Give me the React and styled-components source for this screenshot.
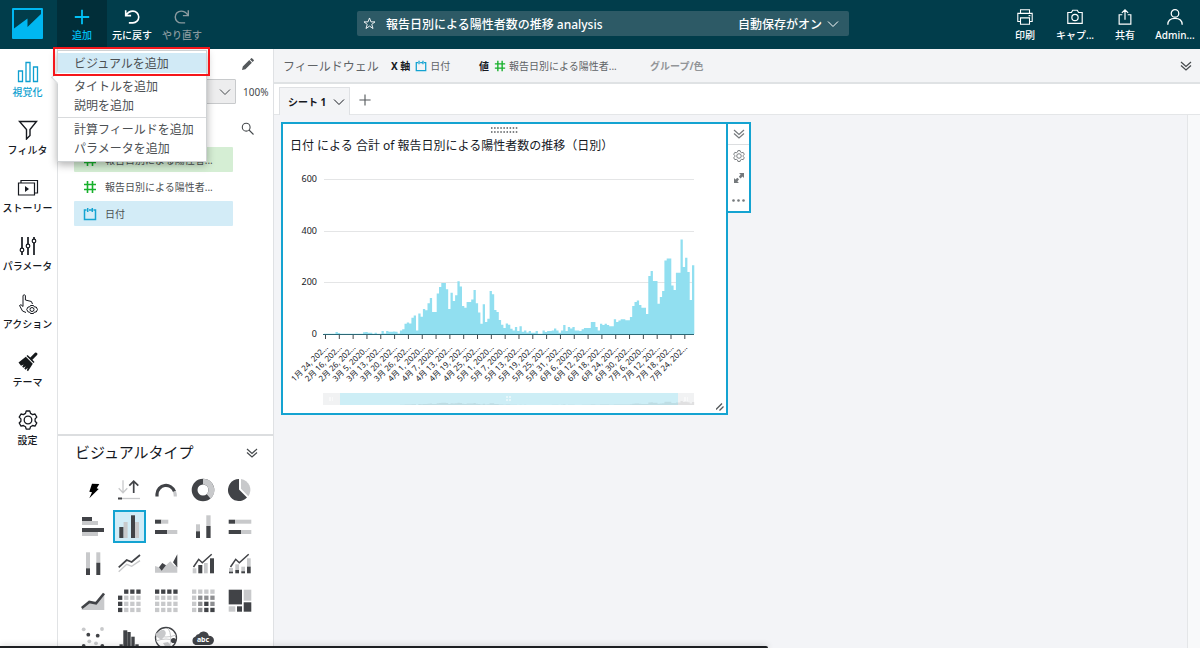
import React from "react";
import { useState } from "react";
import styled, { createGlobalStyle } from "styled-components";

const DARK = "#414347";
const LIGHT = "#c8c9cb";
const MID = "#8d8e91";

const dailyCases = [
  1, 1, 1, 1, 1, 8, 4, 1, 1, 1, 1, 1, 1, 1, 1, 1, 1, 7, 8, 5, 5, 1, 5, 1, 1, 12,
  2, 12, 9, 9, 10, 9, 2, 14, 18, 40, 45, 41, 63, 72, 13, 79, 67, 97, 92, 119,
  139, 85, 85, 157, 182, 197, 197, 173, 97, 160, 128, 150, 204, 184, 108, 102,
  124, 124, 134, 170, 119, 83, 40, 115, 46, 59, 166, 154, 93, 85, 54, 36, 23,
  41, 36, 20, 14, 27, 12, 30, 9, 14, 6, 12, 5, 5, 12, 1, 1, 13, 8, 12, 12, 14,
  21, 14, 5, 14, 35, 12, 27, 21, 27, 13, 13, 12, 18, 23, 23, 23, 46, 46, 27,
  14, 40, 35, 40, 35, 30, 30, 57, 46, 52, 57, 57, 53, 53, 66, 108, 124, 130,
  112, 102, 102, 77, 224, 244, 205, 205, 117, 143, 166, 285, 292, 292, 188,
  170, 237, 237, 366, 259, 295, 240, 132, 266,
];

const axisDates = [
  "1月 24, 202...", "2月 16, 202...", "2月 26, 202...", "3月 5, 2020...",
  "3月 13, 202...", "3月 20, 202...", "3月 26, 202...", "4月 1, 2020...",
  "4月 7, 2020...", "4月 13, 202...", "4月 19, 202...", "4月 25, 202...",
  "5月 1, 2020...", "5月 7, 2020...", "5月 13, 202...", "5月 19, 202...",
  "5月 25, 202...", "5月 31, 202...", "6月 6, 2020...", "6月 12, 202...",
  "6月 18, 202...", "6月 24, 202...", "6月 30, 202...", "7月 6, 2020...",
  "7月 12, 202...", "7月 18, 202...", "7月 24, 202...",
];

/* ---------- icons ---------- */

const Icon = ({ size = 20, box = 20, children, ...rest }) => (
  <svg
    width={size}
    height={size}
    viewBox={`0 0 ${box} ${box}`}
    fill="none"
    stroke="currentColor"
    aria-hidden="true"
    {...rest}
  >
    {children}
  </svg>
);

const Logo = () => (
  <svg width="31" height="31" viewBox="0 0 31 31" aria-hidden="true">
    <rect width="31" height="31" rx="1" fill="#00b7f1" />
    <path d="M2 2h27v4L15.500 19v-8.500L2 20.500z" fill="#013d4b" />
  </svg>
);

const PlusIcon = ({ size = 18 }) => (
  <Icon size={size} strokeWidth={size > 15 ? 2 : 1.6}>
    <path d="M10 2v16M2 10h16" />
  </Icon>
);

const UndoIcon = () => (
  <Icon size={18} strokeWidth="1.8">
    <path d="M3 2.5v6h6M3.5 8C5.300 5 8 3.500 11 3.500a6.500 6.500 0 0 1 0 13H6.500" />
  </Icon>
);

const RedoIcon = () => (
  <Icon size={18} strokeWidth="1.6">
    <path d="M17 2.500v6h-6M16.500 8C14.700 5 12 3.500 9 3.500a6.500 6.500 0 0 0 0 13h4.500" />
  </Icon>
);

const PrintIcon = () => (
  <Icon size={18} strokeWidth="1.200">
    <path d="M5 6V2h10v4M5 15H2V6h16v9h-3M5 11h10v7H5zM14 8.500h2" />
  </Icon>
);

const CameraIcon = () => (
  <Icon size={18} strokeWidth="1.300">
    <path d="M2 5h4l1.500-2.500h5L14 5h4v12H2z" />
    <circle cx="10" cy="10.500" r="3.500" />
  </Icon>
);

const ShareIcon = () => (
  <Icon size={18} strokeWidth="1.300">
    <path d="M7 7.500H3.500V18h13V7.500H13M10 13V2M6.500 5.500L10 2l3.500 3.500" />
  </Icon>
);

const UserIcon = () => (
  <Icon size={18} strokeWidth="1.400">
    <circle cx="10" cy="6" r="4.200" />
    <path d="M2 18.500c0-5 3.500-7 8-7s8 2 8 7" />
  </Icon>
);

const StarIcon = () => (
  <Icon size={13} strokeWidth="1.400">
    <path d="M10 1.500l2.300 6h6.200l-5 3.800 1.900 6.400L10 14l-5.400 3.700 1.900-6.400-5-3.800h6.200z" />
  </Icon>
);

const ChevronIcon = ({ size = 12 }) => (
  <Icon size={size} box={12} strokeWidth="1">
    <path d="M1 3.500l5 5 5-5" />
  </Icon>
);

const DoubleChevronIcon = ({ size = 12 }) => (
  <Icon size={size} box={12} strokeWidth="1.200">
    <path d="M1 2l5 4.500L11 2M1 5.500L6 10l5-4.500" />
  </Icon>
);

const HashIcon = ({ size = 14 }) => (
  <Icon size={size} box={14} stroke="#17b02b" strokeWidth="1.600">
    <path d="M4.500 1v12M9.500 1v12M1 4.500h12M1 9.500h12" />
  </Icon>
);

const DateIcon = ({ size = 14 }) => (
  <Icon size={size} box={14} stroke="#14a3d1" strokeWidth="1.500">
    <path d="M3.500 3H1.500v9.500h11V3h-2M6 3h2.500M4.700 1v4M9.300 1v4" />
  </Icon>
);

const SearchIcon = () => (
  <Icon size={13} box={13} strokeWidth="1.100">
    <circle cx="5.200" cy="5.200" r="3.900" />
    <path d="M8 8l4.500 4.500" />
  </Icon>
);

const PencilIcon = () => (
  <svg width="12" height="12" viewBox="0 0 12 12" fill="#55595c" aria-hidden="true">
    <path d="M0 12l.8-3.400L7.300 2.100l2.600 2.600L3.400 11.200zM8 1.400L9.200.2q.4-.3.8 0l1.800 1.800q.3.400 0 .8L10.600 4z" />
  </svg>
);

const GearIcon = ({ size = 20 }) => (
  <Icon size={size} strokeWidth={size > 15 ? 1.3 : 1.6}>
    <path d="M8.200 1h3.600l.7 2.400 2.100 1.200 2.400-.6 1.800 3.100-1.700 1.800v2.300l1.700 1.800-1.800 3.100-2.400-.6-2.100 1.200-.7 2.400H8.200l-.7-2.400-2.100-1.200-2.400.6L1.200 13l1.700-1.800V8.900L1.200 7.100 3 4l2.400.6 2.100-1.200z" strokeLinejoin="round" />
    <circle cx="10" cy="10" r="3.800" />
  </Icon>
);

const VisualizeIcon = () => (
  <Icon size={22} box={22} strokeWidth="1.300">
    <path d="M1.500 10h4v10.500h-4zM9 1.500h4v19H9zM16.500 6h4v14.500h-4z" />
  </Icon>
);

const FilterIcon = () => (
  <Icon size={20} strokeWidth="1.400">
    <path d="M1.500 1.500h17L12 9.500v6L8.500 19V9.500z" />
  </Icon>
);

const StoryIcon = () => (
  <Icon size={22} box={22} strokeWidth="1.200">
    <path d="M1.500 6h16v12h-16zM4 5.500V3.500h16.500V16H18" />
    <path d="M8 9v6l4-3z" fill="currentColor" stroke="none" />
  </Icon>
);

const SlidersIcon = () => (
  <Icon size={20} strokeWidth="1.700">
    <path d="M4 1v11.500M4 16v3M10 1v7M10 12v7M16 1v2M16 7v12" />
    <circle cx="4" cy="14" r="1.800" strokeWidth="1.200" />
    <circle cx="10" cy="10" r="1.800" strokeWidth="1.200" />
    <circle cx="16" cy="5" r="1.800" strokeWidth="1.200" />
  </Icon>
);

const ActionIcon = () => (
  <Icon size={22} box={22} strokeWidth="1">
    <path d="M9 19.500L5.500 18 2.500 12.500l1.500-.8L6 13.500V2.500q1.200-1.500 2.400 0V7l6 1.500L15.500 11" />
    <path d="M13.500 12.500h3l1 1.500h1.700l1.300 2.500-1.300 2.500h-1.700l-1 1.500h-3l-1-1.500h-1.300L9.700 16.500 11 14h1.500z" />
    <circle cx="15" cy="16.500" r="2" />
  </Icon>
);

const BrushIcon = () => (
  <svg width="20" height="20" viewBox="0 0 20 20" fill="#16191b" aria-hidden="true">
    <path d="M12.300 5.500L17 .8q1-.8 2 .2 1 1 .1 2l-4.700 4.700L16.500 10l-1 1L8.500 4l1-1zM7.800 4.800l7 7-4.800 7.500-1.200-1 1-2.500-2.300 2-1.200-1.200 1.500-2.300-2.600 1.500-1-1.200 1.500-2L3 13.800.500 10.500z" />
  </svg>
);

const ExpandIcon = () => (
  <svg width="10" height="10" viewBox="0 0 10 10" fill="#75797c" aria-hidden="true">
    <path d="M5 0h5v5L8.500 3.500 6.500 5.400 4.900 3.700 6.600 1.600zM5 10H0V5l1.500 1.500 1.800-1.800L5 6.300 3.400 8.400z" />
  </svg>
);

const DotsIcon = () => (
  <svg width="13" height="5" viewBox="0 0 13 5" fill="#75797c" aria-hidden="true">
    <circle cx="1.500" cy="2.500" r="1.300" />
    <circle cx="6.500" cy="2.500" r="1.300" />
    <circle cx="11.500" cy="2.500" r="1.300" />
  </svg>
);

/* ---------- visual type drawings, 24 x 24 ---------- */

// list of [x, y, width, height, colour]
const Rects = ({ items }) =>
  items.map(([x, y, w, h, fill], idx) => (
    <rect key={idx} x={x} y={y} width={w} height={h} fill={fill} />
  ));

const cells = (rows) =>
  rows.flatMap((row, r) =>
    row.map((fill, c) => [1 + c * 6.1, 0.5 + r * 6.1, 4.3, 4.3, fill])
  );

const visualTypes = [
  {
    name: "自動",
    art: <path d="M11 5.700l7.300.3-2.600 4.300 2 .7-9.400 9.300 2.700-6-2.700-.6z" fill="#000" />,
  },
  {
    name: "KPI",
    art: (
      <g fill="none" strokeWidth="1.300">
        <path d="M6 2.300v12M1.700 10.300L6 14.700l4.300-4.400" stroke={LIGHT} />
        <path d="M16.700 15V3M12.300 7.700L16.700 3.200l4.600 4.500" stroke={DARK} strokeWidth="1.700" />
        <path d="M4 20.500h19" stroke={LIGHT} />
        <path d="M1 20.500h4" stroke={DARK} strokeWidth="2" />
      </g>
    ),
  },
  {
    name: "ゲージ",
    art: (
      <g fill="none" strokeWidth="3.200">
        <path d="M3 18.500V16a9 9 0 0 1 17.500-2.500" stroke={DARK} />
        <path d="M20.500 13.500q.8 2 .8 5" stroke={LIGHT} />
      </g>
    ),
  },
  {
    name: "ドーナツ",
    art: (
      <g fill="none" strokeWidth="5.800">
        <circle cx="12" cy="12" r="8.400" stroke={DARK} />
        <path d="M12 3.600a8.400 8.400 0 0 1 5.500 14.700" stroke={LIGHT} />
      </g>
    ),
  },
  {
    name: "円",
    art: (
      <g>
        <path d="M11 1a11 11 0 1 0 8 18.500L11 11.500z" fill={DARK} />
        <path d="M13 1a11 11 0 0 1 7.300 17.300L13 10.700z" fill={LIGHT} />
      </g>
    ),
  },
  {
    name: "水平棒",
    art: (
      <Rects items={[[1, 2, 10, 4, DARK], [1, 6, 16, 4, LIGHT], [1, 13, 22, 4, DARK], [1, 17, 16, 4, LIGHT]]} />
    ),
  },
  {
    name: "垂直棒",
    art: (
      <Rects items={[[2.3, 12, 4.3, 11, DARK], [6.6, 7, 4, 16, LIGHT], [14, 0.3, 4, 22.7, DARK], [18, 7, 4, 16, LIGHT]]} />
    ),
  },
  {
    name: "水平積み上げ棒",
    art: (
      <Rects items={[[1, 4.7, 6.3, 4, DARK], [7.3, 4.7, 7, 4, LIGHT], [1, 15, 12, 4, DARK], [13, 15, 10.3, 4, LIGHT]]} />
    ),
  },
  {
    name: "垂直積み上げ棒",
    art: (
      <Rects items={[[5, 9.3, 4, 7, LIGHT], [5, 16.3, 4, 6.7, DARK], [15.3, 0.3, 4.3, 10.7, LIGHT], [15.3, 11, 4.3, 12, DARK]]} />
    ),
  },
  {
    name: "水平 100% 積み上げ棒",
    art: (
      <Rects items={[[0.7, 4.7, 6.3, 4, DARK], [7, 4.7, 16.3, 4, LIGHT], [0.7, 15, 12.3, 4, DARK], [13, 15, 10.3, 4, LIGHT]]} />
    ),
  },
  {
    name: "垂直 100% 積み上げ棒",
    art: (
      <Rects items={[[5, 0.3, 4, 16, LIGHT], [5, 16.3, 4, 6.7, DARK], [15.3, 0.3, 4, 10.4, LIGHT], [15.3, 10.7, 4, 12.3, DARK]]} />
    ),
  },
  {
    name: "折れ線",
    art: (
      <g fill="none">
        <path d="M1.700 15.300L9.700 8l5 2L23 3" stroke={DARK} strokeWidth="1.700" />
        <path d="M1.700 19.700l8-7.400 5 2L23 8.700" stroke={LIGHT} strokeWidth="1.400" />
      </g>
    ),
  },
  {
    name: "面",
    art: (
      <g>
        <path d="M1 20.700V14l4 1.300 7-2 4.300-4L20.700 14h2.600v6.700z" fill={LIGHT} />
        <path d="M5 15.300L8.300 11l3.700 2.300-4.300 5.400zM23.300 2.300L19 10.300l4.300 5z" fill={DARK} />
      </g>
    ),
  },
  {
    name: "集合棒コンボ",
    art: (
      <g>
        <Rects items={[[1.7, 16.3, 3.7, 5, LIGHT], [7.3, 13, 4, 8.3, DARK], [13, 11, 3.7, 10.3, LIGHT], [19, 6.3, 4, 15, DARK]]} />
        <path d="M2.500 15l5.200-7.700 3.600 3.400 9.400-8.400" fill="none" stroke={DARK} strokeWidth="1.500" />
      </g>
    ),
  },
  {
    name: "積み上げ棒コンボ",
    art: (
      <g>
        <Rects items={[[1, 16, 4, 4, LIGHT], [1, 19.7, 4, 1.6, DARK], [7.3, 12.3, 3.7, 6, LIGHT], [7.3, 18, 3.7, 3.3, DARK], [13.3, 14.7, 3.7, 5, LIGHT], [13.3, 19.3, 3.7, 2, DARK], [19, 6.3, 3.7, 9, LIGHT], [19, 14.7, 3.7, 6.6, DARK]]} />
        <path d="M2.500 15l5.200-7.700 3.600 3.400 9.400-8.400" fill="none" stroke={DARK} strokeWidth="1.500" />
      </g>
    ),
  },
  {
    name: "面折れ線",
    art: (
      <g>
        <path d="M.7 21v-1.700l7.600-6.600 6.700 1.300 8.300-10v17z" fill={LIGHT} />
        <path d="M.7 19l7.600-6 6.700 1.300L23 4.500" fill="none" stroke={DARK} strokeWidth="2.600" />
      </g>
    ),
  },
  {
    name: "ピボットテーブル",
    art: (
      <Rects
        items={cells([
          ["none", DARK, DARK, DARK],
          [DARK, LIGHT, LIGHT, LIGHT],
          [DARK, LIGHT, LIGHT, LIGHT],
          [DARK, LIGHT, LIGHT, LIGHT],
        ])}
      />
    ),
  },
  {
    name: "テーブル",
    art: (
      <Rects
        items={cells([
          [DARK, DARK, DARK, DARK],
          [LIGHT, LIGHT, LIGHT, LIGHT],
          [LIGHT, LIGHT, LIGHT, LIGHT],
          [LIGHT, LIGHT, LIGHT, LIGHT],
        ])}
      />
    ),
  },
  {
    name: "ヒートマップ",
    art: (
      <Rects
        items={cells([
          [LIGHT, LIGHT, LIGHT, LIGHT],
          [LIGHT, MID, MID, MID],
          [LIGHT, MID, DARK, MID],
          [LIGHT, MID, DARK, DARK],
        ])}
      />
    ),
  },
  {
    name: "ツリーマップ",
    art: (
      <Rects items={[[0.7, 0.7, 13.3, 14.7, DARK], [15.7, 0.7, 7.6, 11, LIGHT], [15.7, 13.3, 7.6, 9.4, DARK], [0.7, 17.3, 6.6, 5.4, LIGHT], [9, 17.3, 5, 5.4, DARK]]} />
    ),
  },
  {
    name: "散布図",
    art: (
      <g>
        {[[2.7, 3.3], [21, 3], [8.3, 15.3], [15, 17.3]].map(([x, y]) => (
          <circle key={x} cx={x} cy={y} r="1.900" fill={LIGHT} />
        ))}
        {[[7.3, 8.7], [16.7, 9.7], [2.7, 20], [21.3, 20]].map(([x, y]) => (
          <circle key={x} cx={x} cy={y} r="1.900" fill={DARK} />
        ))}
      </g>
    ),
  },
  {
    name: "ヒストグラム",
    art: (
      <Rects items={[[2.5, 18.3, 3.3, 5, DARK], [6.3, 4.3, 4, 19, DARK], [10.3, 6, 3.4, 17.3, DARK], [14.3, 10.7, 3.4, 12.6, DARK], [18.3, 18.3, 3.4, 5, DARK]]} />
    ),
  },
  {
    name: "マップ",
    art: (
      <g>
        <circle cx="12" cy="12" r="10.500" fill="#fff" stroke={DARK} strokeWidth="1.300" />
        <path d="M5 5.500Q9 2.500 11 5t-1 6-3 3-4-3 2-5.500zM9 17l5-1 3 4-5 2z" fill={LIGHT} />
        <path d="M2 9q10 4 20 0M2 15q10-4 20 0M14 2q5 8 1 20" fill="none" stroke={LIGHT} />
        <circle cx="19.500" cy="14.500" r="2.600" fill={DARK} />
      </g>
    ),
  },
  {
    name: "ワードクラウド",
    art: (
      <g>
        <path d="M4.500 19a4.500 4.500 0 0 1 0-8.500q.8-2.500 3.500-2.500 1.500-3 5-2.500 4 .5 4.800 4.300 4.700.2 5.200 4.500-.3 4.200-4.500 4.700z" fill={DARK} />
        <text x="12" y="16" textAnchor="middle" fontSize="7" fontWeight="700" fill="#fff">
          abc
        </text>
      </g>
    ),
  },
];

/* ---------- chart ---------- */

const BASE = 178;
const LEFT = 41;
const BAR = 2.3;
const yOf = (value) => BASE - (value * 155) / 600;

function stepPath(values, left, width, y) {
  const steps = values
    .map((v, idx) => `L${(left + idx * width).toFixed(1)} ${y(v).toFixed(1)}h${width}`)
    .join("");
  return `M${left} ${y(0)}${steps}V${y(0)}z`;
}

function CasesChart() {
  return (
    <ChartSvg viewBox="0 0 443 257" role="img" aria-label="報告日別による陽性者数の推移">
      {[600, 400, 200, 0].map((value) => (
        <g key={value}>
          {value > 0 && (
            <line x1={LEFT} x2="411" y1={Math.round(yOf(value)) + 0.5} y2={Math.round(yOf(value)) + 0.5} stroke="#e4e5e6" />
          )}
          <text x="34" y={Math.round(yOf(value)) + 3} textAnchor="end" fontSize="9" fill="#16191f">
            {value}
          </text>
        </g>
      ))}
      <path d={stepPath(dailyCases, LEFT, BAR, yOf)} fill="#91dff0" />
      <line x1="40" x2="411" y1={BASE + 0.5} y2={BASE + 0.5} stroke="#2c6875" />
      {axisDates.map((label, idx) => {
        const x = 42.5 + idx * 13.82;
        return (
          <g key={label}>
            <line x1={x} x2={x} y1={BASE + 1} y2={BASE + 5} stroke="#45494c" />
            <text transform={`translate(${x + 3} 192) rotate(-45)`} textAnchor="end" fontSize="8" fill="#16191f">
              {label}
            </text>
          </g>
        );
      })}
      <rect x="40" y="237" width="371" height="12" fill="#f1f2f3" />
      <rect x="57" y="237" width="338" height="12" fill="#cdeef6" />
      <path d={stepPath(dailyCases, LEFT, BAR, (v) => 249 - v / 90)} fill="#000" opacity=".07" />
      <path d="M46 242h4M46 244h4M401 242h4M401 244h4M223 241h6M223 244h6" stroke="#fff" strokeDasharray="2 1" />
    </ChartSvg>
  );
}

/* ---------- page ---------- */

const navItems = [
  { label: "視覚化", icon: <VisualizeIcon /> },
  { label: "フィルタ", icon: <FilterIcon /> },
  { label: "ストーリー", icon: <StoryIcon /> },
  { label: "パラメータ", icon: <SlidersIcon /> },
  { label: "アクション", icon: <ActionIcon /> },
  { label: "テーマ", icon: <BrushIcon /> },
  { label: "設定", icon: <GearIcon /> },
];

const fields = [
  { id: 1, label: "報告日別による陽性者...", icon: <HashIcon />, color: "#d5eed4" },
  { id: 2, label: "報告日別による陽性者...", icon: <HashIcon />, color: "#fff" },
  { id: 3, label: "日付", icon: <DateIcon />, color: "#d3ecf7" },
];

function App() {
  const [section, setSection] = useState("視覚化");
  const [visual, setVisual] = useState("垂直棒");
  const [menuOpen, setMenuOpen] = useState(true);

  return (
    <Page>
      <GlobalStyle />
      <Header>
        <LogoLink href="#" aria-label="QuickSight">
          <Logo />
        </LogoLink>
        <AddWrapper>
          <HeaderButton $active onClick={() => setMenuOpen(!menuOpen)}>
            <PlusIcon />
            追加
          </HeaderButton>
          {menuOpen && (
            <>
              <Menu>
                <MenuButton $selected>ビジュアルを追加</MenuButton>
                <MenuButton>タイトルを追加</MenuButton>
                <MenuButton>説明を追加</MenuButton>
                <MenuLine />
                <MenuButton>計算フィールドを追加</MenuButton>
                <MenuButton>パラメータを追加</MenuButton>
              </Menu>
              <Highlight />
            </>
          )}
        </AddWrapper>
        <HeaderButton>
          <UndoIcon />
          元に戻す
        </HeaderButton>
        <HeaderButton $muted>
          <RedoIcon />
          やり直す
        </HeaderButton>
        <TitleArea>
          <TitleBar>
            <StarIcon />
            <AnalysisName>報告日別による陽性者数の推移 analysis</AnalysisName>
            <AutoSave>
              自動保存がオン
              <ChevronIcon />
            </AutoSave>
          </TitleBar>
        </TitleArea>
        <HeaderButton>
          <PrintIcon />
          印刷
        </HeaderButton>
        <HeaderButton>
          <CameraIcon />
          キャプ...
        </HeaderButton>
        <HeaderButton>
          <ShareIcon />
          共有
        </HeaderButton>
        <HeaderButton>
          <UserIcon />
          Admin...
        </HeaderButton>
      </Header>

      <Body>
        <SideNav>
          {navItems.map((item) => (
            <NavButton
              key={item.label}
              $active={item.label === section}
              onClick={() => setSection(item.label)}
            >
              <NavIcon>{item.icon}</NavIcon>
              {item.label}
            </NavButton>
          ))}
        </SideNav>

        <Panel>
          <FieldSection>
            <ToolRow>
              <IconButton aria-label="編集">
                <PencilIcon />
              </IconButton>
            </ToolRow>
            <DataSetRow>
              <SelectBox>
                <DataSetSelect aria-label="データセット">
                  <option></option>
                </DataSetSelect>
                <SelectArrow>
                  <ChevronIcon />
                </SelectArrow>
              </SelectBox>
              100%
            </DataSetRow>
            <SearchRow>
              <IconButton aria-label="検索">
                <SearchIcon />
              </IconButton>
            </SearchRow>
            <FieldList>
              {fields.map((field) => (
                <Field key={field.id} $color={field.color}>
                  {field.icon}
                  {field.label}
                </Field>
              ))}
            </FieldList>
          </FieldSection>
          <VisualSection>
            <VisualHeader>
              <VisualTitle>ビジュアルタイプ</VisualTitle>
              <IconButton aria-label="折りたたむ">
                <DoubleChevronIcon />
              </IconButton>
            </VisualHeader>
            <VisualGrid>
              {visualTypes.map((type) => (
                <VisualButton
                  key={type.name}
                  aria-label={type.name}
                  $selected={type.name === visual}
                  onClick={() => setVisual(type.name)}
                >
                  <svg width="24" height="24" viewBox="0 0 24 24">
                    {type.art}
                  </svg>
                </VisualButton>
              ))}
            </VisualGrid>
          </VisualSection>
        </Panel>

        <Main>
          <FieldWell>
            <WellTitle>フィールドウェル</WellTitle>
            <WellItem>
              <b>X 軸</b>
              <DateIcon size={12} />
              日付
            </WellItem>
            <WellItem>
              <b>値</b>
              <HashIcon size={12} />
              報告日別による陽性者...
            </WellItem>
            <WellEmpty>グループ/色</WellEmpty>
            <IconButton aria-label="フィールドウェルを開く">
              <DoubleChevronIcon />
            </IconButton>
          </FieldWell>
          <Tabs>
            <Tab>
              シート 1
              <ChevronIcon />
            </Tab>
            <AddTab aria-label="シートを追加">
              <PlusIcon size={14} />
            </AddTab>
          </Tabs>
          <Workspace>
            <Canvas>
              <Card>
                <Grip>
                  <svg width="27" height="6" viewBox="0 0 27 6" stroke="#55595c" strokeWidth="1.500" strokeDasharray="1.500 1.600" aria-hidden="true">
                    <path d="M0 1h27M0 5h27" />
                  </svg>
                </Grip>
                <CardTitle>日付 による 合計 of 報告日別による陽性者数の推移（日別）</CardTitle>
                <CasesChart />
                <Resize>
                  <svg width="8" height="8" viewBox="0 0 8 8" stroke="#55595c" strokeWidth="1.300" aria-hidden="true">
                    <path d="M0 6.500L6 .5M3.500 7.500l4-4" />
                  </svg>
                </Resize>
              </Card>
              <CardTools>
                <CardTool $line aria-label="折りたたむ">
                  <DoubleChevronIcon />
                </CardTool>
                <CardTool aria-label="設定">
                  <GearIcon size={12} />
                </CardTool>
                <CardTool aria-label="拡大">
                  <ExpandIcon />
                </CardTool>
                <CardTool aria-label="メニュー">
                  <DotsIcon />
                </CardTool>
              </CardTools>
            </Canvas>
            <Gutter />
          </Workspace>
        </Main>
      </Body>
      <StatusLine />
    </Page>
  );
}

export default App;

const GlobalStyle = createGlobalStyle`
  * {
    box-sizing: border-box;
  }
  body {
    margin: 0;
    font-family: "Noto Sans", "Noto Sans CJK JP", sans-serif;
    font-size: 10px;
    color: #16191f;
  }
  button, select {
    font: inherit;
    color: inherit;
    border: none;
    background: none;
    padding: 0;
    cursor: pointer;
  }
  svg {
    flex-shrink: 0;
  }
`;

const Page = styled.div`
  display: flex;
  flex-direction: column;
  height: 100vh;
  overflow: hidden;
`;

const Header = styled.header`
  display: flex;
  flex-shrink: 0;
  height: 49px;
  background: #013d4b;
  color: #fff;
`;

const LogoLink = styled.a`
  width: 57px;
  padding: 8px 12px;
`;

const AddWrapper = styled.div`
  position: relative;
  display: flex;
`;

const HeaderButton = styled.button`
  display: flex;
  flex-direction: column;
  align-items: center;
  gap: 1px;
  width: 50px;
  padding-top: 8px;
  line-height: 16px;
  font-weight: 500;
  white-space: nowrap;
  color: ${(props) => (props.$active ? "#00c0f5" : props.$muted ? "#8a9a9f" : "#fff")};
  background: ${(props) => (props.$active ? "#012e39" : "transparent")};
`;

const Menu = styled.div`
  position: absolute;
  z-index: 2;
  top: 50px;
  left: 0;
  width: 150px;
  padding: 2px 0 3px;
  background: #fff;
  border: 1px solid #cfd2d4;
  box-shadow: 0 3px 8px rgba(0, 0, 0, 0.3);

  &::before {
    content: "";
    position: absolute;
    top: 22px;
    left: -5px;
    width: 8px;
    height: 8px;
    background: #fff;
    border-left: 1px solid #d5d8da;
    border-bottom: 1px solid #d5d8da;
    transform: rotate(45deg);
  }
`;

const MenuButton = styled.button`
  position: relative;
  display: block;
  width: 100%;
  height: ${(props) => (props.$selected ? "20px" : "19px")};
  margin-bottom: ${(props) => (props.$selected ? "4px" : "0")};
  padding-left: 16px;
  text-align: left;
  font-size: 12px;
  line-height: 19px;
  color: #4c5053;
  background: ${(props) => (props.$selected ? "#d1eaf6" : "#fff")};
`;

const MenuLine = styled.div`
  height: 1px;
  margin: 2px 0;
  background: #d9dbdd;
`;

const Highlight = styled.div`
  position: absolute;
  z-index: 3;
  top: 47px;
  left: -4px;
  width: 157px;
  height: 29px;
  border: 2px solid #f5161b;
  pointer-events: none;
`;

const TitleArea = styled.div`
  display: flex;
  flex: 1;
  justify-content: center;
  align-items: center;
  padding: 0 151px 2px 150px;
`;

const TitleBar = styled.div`
  display: flex;
  flex: 1;
  align-items: center;
  height: 25px;
  padding: 0 10px 0 6px;
  border-radius: 2px;
  background: #2d5a66;
  font-size: 12px;
  font-weight: 500;
`;

const AnalysisName = styled.span`
  flex: 1;
  padding-left: 10px;
`;

const AutoSave = styled.button`
  display: flex;
  align-items: center;
  gap: 5px;
`;

const Body = styled.div`
  display: flex;
  flex: 1;
  min-height: 0;
`;

const SideNav = styled.nav`
  flex-shrink: 0;
  width: 57px;
  padding-top: 11px;
`;

const NavButton = styled.button`
  display: flex;
  flex-direction: column;
  align-items: center;
  width: 55px;
  height: 58px;
  line-height: 16px;
  font-weight: 500;
  white-space: nowrap;
  color: ${(props) => (props.$active ? "#0f9fd0" : "#16191f")};
`;

const NavIcon = styled.span`
  display: flex;
  align-items: center;
  height: 24px;
`;

const Panel = styled.aside`
  display: flex;
  flex-direction: column;
  flex-shrink: 0;
  width: 217px;
  border-left: 1px solid #e1e3e5;
  border-right: 1px solid #dfe1e4;
`;

const FieldSection = styled.section`
  flex: 1;
  min-height: 0;
`;

const IconButton = styled.button`
  display: flex;
  align-items: center;
  justify-content: center;
  color: #45494c;
`;

const ToolRow = styled.div`
  display: flex;
  justify-content: flex-end;
  height: 30px;
  padding-right: 19px;
`;

const DataSetRow = styled.div`
  display: flex;
  align-items: center;
  gap: 7px;
  height: 25px;
  padding-left: 16px;
  color: #45494c;
`;

const SelectBox = styled.div`
  position: relative;
  width: 162px;
`;

const DataSetSelect = styled.select`
  display: block;
  width: 100%;
  height: 25px;
  appearance: none;
  border: 1px solid #c8cacc;
  border-radius: 1px;
  background: #ededee;
`;

const SelectArrow = styled.span`
  position: absolute;
  top: 7px;
  right: 5px;
  pointer-events: none;
`;

const SearchRow = styled.div`
  display: flex;
  justify-content: flex-end;
  height: 43px;
  padding: 6px 19px 0 0;

  button {
    height: 37px;
  }
`;

const FieldList = styled.ul`
  display: flex;
  flex-direction: column;
  gap: 2px;
  margin: 0;
  padding: 0 40px 0 16px;
  list-style: none;
`;

const Field = styled.li`
  display: flex;
  align-items: center;
  gap: 8px;
  height: 25px;
  padding-left: 9px;
  border-radius: 1px;
  white-space: nowrap;
  color: #4c5053;
  background: ${(props) => props.$color};
`;

const VisualSection = styled.section`
  flex-shrink: 0;
  height: 33vh;
  border-top: 2px solid #dcdee0;
`;

const VisualHeader = styled.div`
  display: flex;
  justify-content: space-between;
  height: 33px;
  padding: 0 15px 0 17px;
`;

const VisualTitle = styled.h2`
  margin: 0;
  font-size: 15px;
  font-weight: 400;
  line-height: 33px;
`;

const VisualGrid = styled.div`
  display: grid;
  grid-template-columns: repeat(5, 33px);
  grid-auto-rows: 33px;
  justify-content: space-between;
  row-gap: 4px;
  padding: 4px 17px 0 18px;
`;

const VisualButton = styled.button`
  display: flex;
  align-items: center;
  justify-content: center;
  border: 2px solid ${(props) => (props.$selected ? "#14a3d1" : "transparent")};
  background: ${(props) => (props.$selected ? "#d1ecf7" : "transparent")};
`;

const Main = styled.main`
  display: flex;
  flex-direction: column;
  flex: 1;
  min-width: 0;
`;

const FieldWell = styled.div`
  display: grid;
  grid-template-columns: 108px 88px 171px 1fr auto;
  align-items: center;
  height: 35px;
  padding: 0 8px 0 9px;
  background: #f3f4f6;
  border-bottom: 2px solid #dfe2e4;
  color: #5f6366;
`;

const WellTitle = styled.span`
  font-size: 12px;
  white-space: nowrap;
`;

const WellItem = styled.span`
  display: flex;
  align-items: center;
  gap: 3px;
  white-space: nowrap;

  b {
    margin-right: 2px;
    color: #16191f;
  }
`;

const WellEmpty = styled.b`
  color: #929598;
`;

const Tabs = styled.div`
  display: flex;
  align-items: flex-end;
  height: 31px;
  padding-left: 5px;
  border-bottom: 1px solid #e4e6e8;
`;

const Tab = styled.button`
  display: flex;
  align-items: center;
  gap: 7px;
  height: 28px;
  margin-bottom: -1px;
  padding: 0 4px 0 8px;
  border: 1px solid #dfe1e4;
  border-bottom: none;
  background: #f3f4f6;
  font-weight: 700;
`;

const AddTab = styled.button`
  display: flex;
  align-items: center;
  height: 28px;
  padding: 0 8px;
  color: #55595c;
`;

const Workspace = styled.div`
  display: flex;
  flex: 1;
  background: #f3f4f7;
`;

const Canvas = styled.div`
  display: flex;
  flex: 1;
  align-items: flex-start;
  padding: 7px;
`;

const Gutter = styled.div`
  width: 13px;
  border-left: 1px solid #e4e6e8;
  background: #f8f9fa;
`;

const Card = styled.article`
  position: relative;
  width: 447px;
  border: 2px solid #14a3d1;
  background: #fff;
`;

const Grip = styled.div`
  display: flex;
  align-items: center;
  justify-content: center;
  height: 12px;
`;

const CardTitle = styled.h3`
  margin: 0;
  padding-left: 7px;
  font-size: 12px;
  font-weight: 400;
  line-height: 20px;
`;

const ChartSvg = styled.svg`
  display: block;
  width: 100%;
`;

const Resize = styled.span`
  position: absolute;
  right: 2px;
  bottom: 2px;
  display: flex;
`;

const CardTools = styled.div`
  width: 23px;
  border: 2px solid #14a3d1;
  border-left: none;
  background: #fff;
`;

const CardTool = styled.button`
  display: flex;
  align-items: center;
  justify-content: center;
  width: 100%;
  height: ${(props) => (props.$line ? "21px" : "22px")};
  border-bottom: ${(props) => (props.$line ? "1px solid #dcdee0" : "none")};
  color: #75797c;
`;

const StatusLine = styled.div`
  position: fixed;
  z-index: 4;
  left: 0;
  bottom: 0;
  width: 64%;
  height: 2px;
  border-radius: 0 2px 0 0;
  background: #1d1f22;
  box-shadow: 0 0 6px rgba(0, 0, 0, 0.3);
`;
